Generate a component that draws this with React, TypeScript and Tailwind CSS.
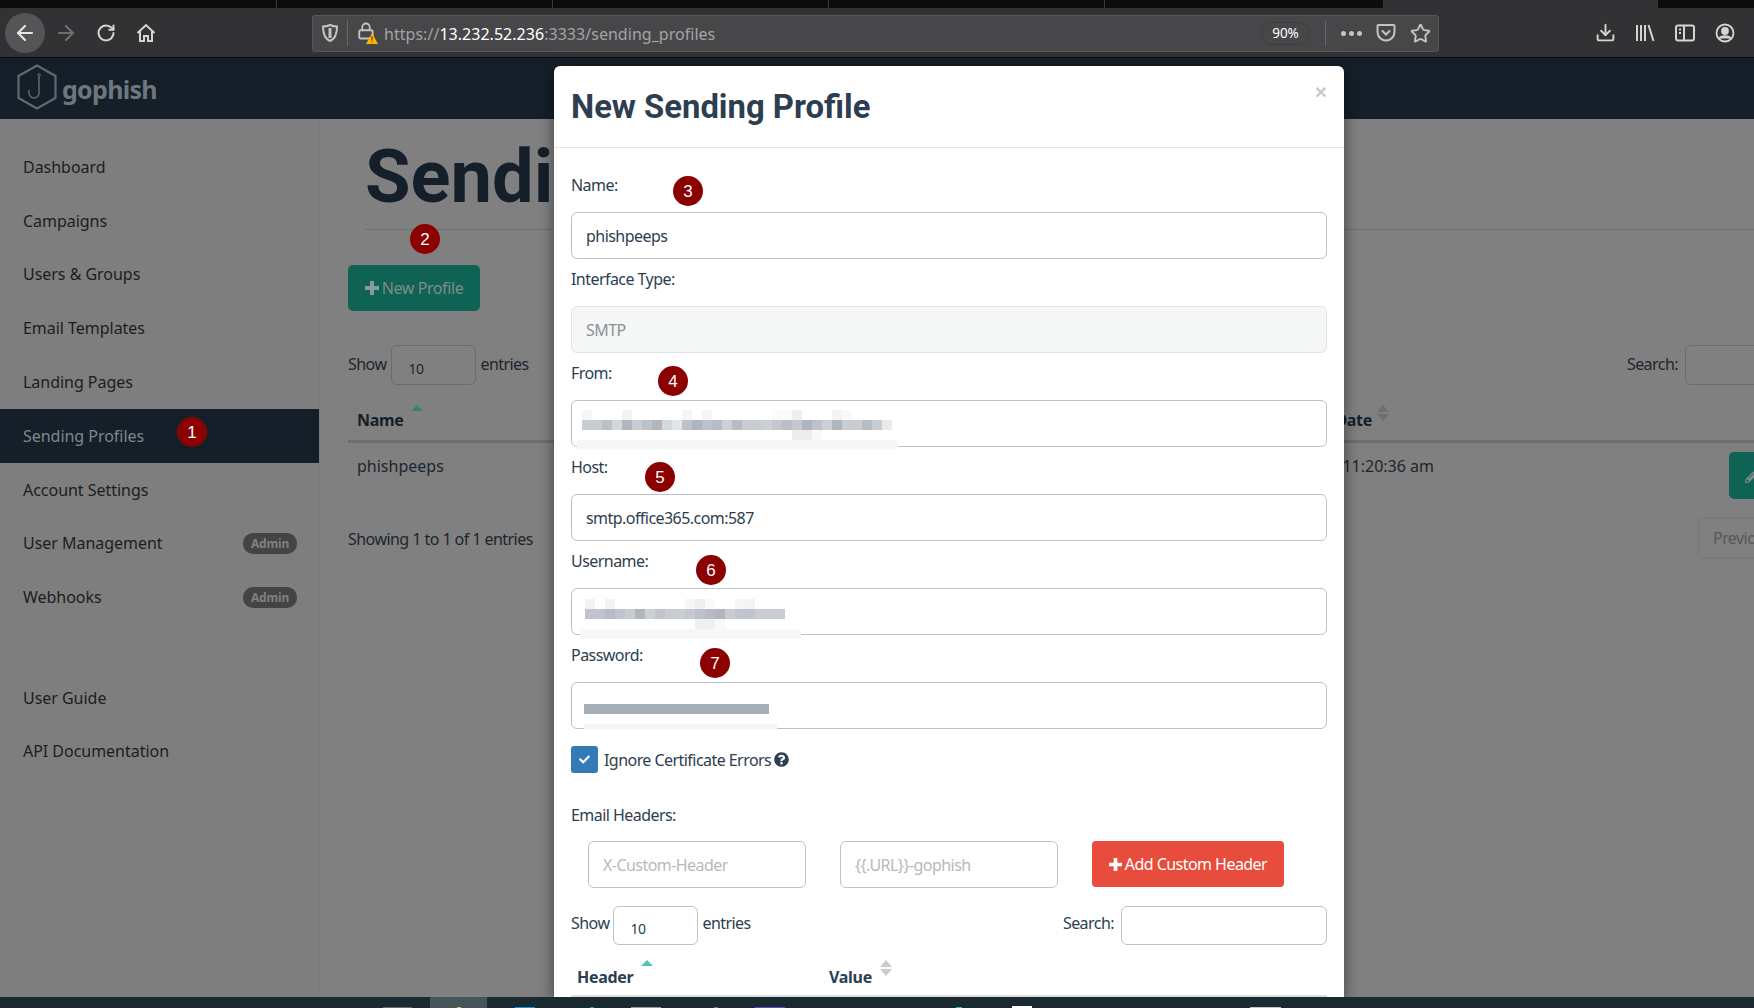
import React from "react";
import { ArrowLeft, ArrowRight, RotateCw, Lock, Star, Download } from "lucide-react";
import { FaCheck, FaQuestionCircle, FaPencilAlt } from "react-icons/fa";

const body = "font-['Noto_Sans',sans-serif] text-[16px] tracking-[-0.55px]";

function Callout({ n, className }: { n: number; className: string }) {
  return (
    <div className={`absolute z-30 flex h-[30px] w-[30px] items-center justify-center rounded-full bg-[#8b0000] font-['Liberation_Sans',sans-serif] text-[17px] leading-none text-white ${className}`}>
      {n}
    </div>
  );
}

function Plus({ className }: { className: string }) {
  return (
    <svg viewBox="0 0 14 14" className={className} fill="currentColor">
      <path d="M5 0h4v5h5v4H9v5H5V9H0V5h5z" />
    </svg>
  );
}

function SortArrows({ dark }: { dark?: boolean }) {
  const c = dark ? "#6f6f6f" : "#cccccc";
  return (
    <svg width="12" height="16" viewBox="0 0 12 16" className="shrink-0">
      <path d="M6 0l6 7H0z" fill={c} />
      <path d="M6 16l6-7H0z" fill={c} />
    </svg>
  );
}

function UpArrow({ color }: { color: string }) {
  return (
    <svg width="12" height="6" viewBox="0 0 12 6" className="block">
      <path d="M6 0l6 6H0z" fill={color} />
    </svg>
  );
}

function Cells({ cells, className }: { cells: string[]; className: string }) {
  return (
    <div className={`absolute flex ${className}`}>
      {cells.map((c, i) => (
        <span key={i} className="h-[10px] w-[10px] shrink-0" style={{ backgroundColor: c === "-" ? "transparent" : `#${c}` }} />
      ))}
    </div>
  );
}

const navTop = ["Dashboard", "Campaigns", "Users & Groups", "Email Templates", "Landing Pages", "Sending Profiles", "Account Settings", "User Management", "Webhooks"];

function Sidebar() {
  return (
    <aside className="w-[320px] shrink-0 border-r border-[#7a7a7a] bg-[#7e7e7e] pt-[21px] font-['Noto_Sans',sans-serif] text-[16px] tracking-[-0.03px] text-[#1d1d1d]">
      {navTop.map((t) => {
        const active = t === "Sending Profiles";
        const admin = t === "User Management" || t === "Webhooks";
        return (
          <div key={t} className={`flex h-[53.8px] w-[319px] items-center justify-between pl-[23px] pr-[22px] ${active ? "bg-[#151f29] text-[#7f878d]" : ""}`}>
            <span>{t}</span>
            {admin && (
              <span className="rounded-[10px] bg-[#444444] px-[8px] py-[3px] text-[12px] font-bold leading-[15px] tracking-[-0.2px] text-[#808080]">Admin</span>
            )}
          </div>
        );
      })}
      <div className="h-[47px]" />
      {["User Guide", "API Documentation"].map((t) => (
        <div key={t} className="flex h-[53.5px] items-center pl-[23px]">{t}</div>
      ))}
    </aside>
  );
}

function Main() {
  return (
    <main className={`min-w-0 flex-1 overflow-hidden bg-[#808080] pl-[28px] text-[#1c262e] ${body}`}>
      <div className="ml-[17px] flex h-[111px] items-center border-b border-[#707070] pt-[6px]">
        <h1 className="font-['Roboto',sans-serif] text-[74px] font-bold leading-none tracking-normal text-[#151f29]">Sending Profiles</h1>
      </div>
      <button className="mt-[35px] flex h-[46px] w-[132px] items-center justify-center gap-[3px] rounded-[5px] bg-[#0f6354] tracking-[-0.4px] text-[#7f8c88]">
        <Plus className="h-[14px] w-[14px] text-[#8a9a96]" />
        <span>New Profile</span>
      </button>
      <div className="mt-[34px] flex h-[40px] w-[1406px] items-center">
        <span className="mb-[2px]">Show</span>
        <div className="ml-[5px] flex h-[40px] w-[85px] items-end rounded-[6px] border border-[#6c6c6c] pb-[5px] pl-[16px] text-[14px] leading-[20px]">10</div>
        <span className="mb-[2px] ml-[4px]">entries</span>
        <span className="mb-[2px] ml-auto">Search:</span>
        <div className="ml-[7px] mr-[-31px] h-[40px] w-[100px] shrink-0 rounded-[6px] border border-[#6c6c6c]" />
      </div>
      <div className="flex h-[58px] w-[1406px] items-end border-b-[3px] border-[#6e6e6e] pb-[8px] pl-[9px] font-bold tracking-[-0.3px] text-[#151f29]">
        <div className="relative w-[700px]">
          <span>Name</span>
          <div className="absolute left-[54px] top-[-3px]"><UpArrow color="#2f8573" /></div>
        </div>
        <div className="flex w-[315px] justify-end">
          <span>Modified Date</span>
        </div>
        <div className="relative ml-[5px] h-[20px] w-[12px]">
          <div className="absolute top-[-7px]"><SortArrows dark /></div>
        </div>
      </div>
      <div className="flex h-[56px] w-[1406px] items-start pl-[9px] pt-[11px] tracking-[0px]">
        <span className="w-[700px]">phishpeeps</span>
        <span className="w-[377px] text-right">March 2021, 11:20:36 am</span>
        <div className="ml-auto mr-[-20px] mt-[-2px] flex h-[47px] w-[45px] shrink-0 items-center rounded-[5px] bg-[#0f6354] pl-[16px]">
          <FaPencilAlt className="h-[14px] w-[14px] text-[#7f8c88]" />
        </div>
      </div>
      <div className="flex h-[60px] w-[1406px] items-start">
        <span className="mt-[28px]">Showing 1 to 1 of 1 entries</span>
        <div className="ml-auto mr-[-22px] mt-[18px] h-[41px] w-[78px] shrink-0 rounded-[5px] border border-[#777777] px-[14px] py-[8px] text-[#575757]">Previous</div>
      </div>
    </main>
  );
}

function Field({ label, value, disabled, children }: { label: string; value?: string; disabled?: boolean; children?: React.ReactNode }) {
  return (
    <div>
      <div className="h-[47px] w-fit pt-[8px] leading-[24px]">{label}</div>
      <div className="relative h-[47px]">
        <input
          readOnly
          disabled={disabled}
          aria-label={label}
          defaultValue={value}
          className={`h-[47px] w-full rounded-[6px] border px-[14px] outline-none ${disabled ? "border-[#e1e4e6] bg-[#f5f6f6] text-[#8a9096]" : "border-[#bdc3c7] bg-white text-[#2c3e50]"}`}
        />
        {children}
      </div>
    </div>
  );
}

function Modal() {
  return (
    <div className={`absolute left-[554px] top-[66px] z-10 h-[931px] w-[790px] overflow-hidden rounded-t-[6px] bg-white text-[#2c3e50] shadow-[0_5px_15px_rgba(0,0,0,0.5)] ${body}`}>
      <div className="flex h-[82px] items-start justify-between border-b border-[#e5e5e5] pl-[17px] pr-[17px]">
        <h2 className="mt-[19px] font-['Roboto',sans-serif] text-[32.8px] font-bold leading-[44px] tracking-normal text-[#2c3e50]">New Sending Profile</h2>
        <span className="mt-[14px] font-['Liberation_Sans',sans-serif] text-[21px] font-bold leading-[24px] tracking-normal text-[#c9c9c9]">×</span>
      </div>
      <div className="px-[17px] pt-[17px]">
        <Field label="Name:" value="phishpeeps" />
        <Field label="Interface Type:" value="SMTP" disabled />
        <Field label="From:">
          <Cells className="left-[11px] top-[10px]" cells={["f5f6f6", "-", "-", "-", "f2f3f3", "-", "-", "-", "-", "-", "f5f5f6", "-", "f5f5f6", "-", "-", "-", "-", "-", "-", "fbfbfb", "fbfbfb", "eeeff1", "-", "-", "-", "f2f3f4", "f9f9f9"]} />
          <Cells className="left-[11px] top-[20px]" cells={["c8cdd2", "c8cdd2", "b9c0c6", "d3d7da", "afb6bd", "c8cdd2", "bcc2c9", "afb7be", "d5d8db", "e2e4e6", "bcc2c9", "aeb6bd", "bcc2c9", "b5bcc3", "ccd0d4", "b5bcc3", "c8cdd2", "c8cdd2", "ccd0d6", "c3c8cd", "b9bfc6", "c3c8cd", "aeb6bd", "bcc2c9", "cbd0d4", "aeb6bd", "c8cdd2", "c8cdd2", "b5bcc3", "c8cdd2", "e8eaeb"]} />
          <Cells className="left-[221px] top-[30px]" cells={["ebecee", "ebecee", "f8f8f8"]} />
          <div className="absolute left-[6px] top-[40px] h-[9px] w-[321px] bg-[#f6f7f7]" />
        </Field>
        <Field label="Host:" value="smtp.office365.com:587" />
        <Field label="Username:">
          <Cells className="left-[14px] top-[11px]" cells={["f3f3f4", "-", "f3f3f4", "-", "-", "-", "-", "-", "-", "-", "f5f5f6", "edeef0", "fafafa", "-", "-", "f6f6f7", "f2f3f4"]} />
          <Cells className="left-[14px] top-[21px]" cells={["c0c5cd", "c0c5cd", "b6bcc5", "c0c5cd", "c8cdd0", "aeb6be", "cbd0d3", "c0c5cd", "c8cdd2", "c8cdd2", "c4c8cf", "bcc2c9", "b4bbc3", "b0b8bf", "c5cbce", "c0c5cd", "c0c5cd", "c8ccd3", "c8ccd3", "c8ccd3"]} />
          <Cells className="left-[124px] top-[31px]" cells={["eeeff1", "eeeff1", "f8f8f8"]} />
          <div className="absolute left-[9px] top-[41px] h-[10px] w-[221px] bg-[#f6f7f7]" />
        </Field>
        <Field label="Password:">
          <div className="absolute left-[13px] top-[22px] h-[10px] w-[185px] bg-[#a6afb6]" />
          <div className="absolute left-[13px] top-[42px] h-[6px] w-[193px] bg-[#f5f6f6]" />
        </Field>
        <div className="mt-[17px] flex h-[27px] items-center">
          <div className="flex h-[27px] w-[27px] items-center justify-center rounded-[3px] bg-[#337ab7]">
            <FaCheck className="h-[11px] w-[11px] text-white" />
          </div>
          <span className="ml-[6px]">Ignore Certificate Errors</span>
          <FaQuestionCircle className="ml-[3px] h-[15px] w-[15px] text-[#2c3e50]" />
        </div>
        <div className="mt-[30px] leading-[24px]">Email Headers:</div>
        <div className="mt-[14px] flex h-[47px] items-start pl-[17px]">
          <input readOnly aria-label="Header name" placeholder="X-Custom-Header" className="h-[47px] w-[218px] rounded-[6px] border border-[#bdc3c7] px-[14px] outline-none placeholder:text-[#b4bac0]" />
          <input readOnly aria-label="Header value" placeholder="{{.URL}}-gophish" className="ml-[34px] h-[47px] w-[218px] rounded-[6px] border border-[#bdc3c7] px-[14px] outline-none placeholder:text-[#b4bac0]" />
          <button className="ml-[34px] flex h-[46px] w-[192px] items-center justify-center gap-[3px] rounded-[4px] bg-[#e74c3c] text-white">
            <Plus className="h-[13px] w-[13px]" />
            <span>Add Custom Header</span>
          </button>
        </div>
        <div className="mt-[18px] flex h-[39px] items-center">
          <span className="mb-[6px]">Show</span>
          <div className="ml-[4px] flex h-[39px] w-[85px] items-end rounded-[6px] border border-[#bdc3c7] pb-[5px] pl-[16px] text-[14px] leading-[20px]">10</div>
          <span className="mb-[6px] ml-[4px]">entries</span>
          <span className="mb-[6px] ml-auto">Search:</span>
          <div className="ml-[7px] h-[39px] w-[206px] rounded-[6px] border border-[#bdc3c7]" />
        </div>
        <div className="flex h-[53px] border-b-[3px] border-[#dddddd] pl-[6px] font-bold tracking-[-0.3px]">
          <div className="relative mt-[21px] w-[252px] leading-[22px]">
            Header
            <div className="absolute left-[64px] top-[-6px]"><UpArrow color="#48c9b0" /></div>
          </div>
          <div className="mt-[21px] leading-[22px]">Value</div>
          <div className="ml-[8px] mt-[15px]"><SortArrows /></div>
        </div>
      </div>
    </div>
  );
}

function TopBar() {
  const ic = "text-[#d4d4d4]";
  return (
    <header className="shrink-0 font-['Noto_Sans',sans-serif]">
      <div className="flex h-[8px] bg-[#0c0c0c]">
        <div className="w-[277px] border-r border-[#3a3a3a]" />
        <div className="w-[276px] border-r border-[#3a3a3a]" />
        <div className="w-[276px] border-r border-[#3a3a3a]" />
        <div className="w-[276px] border-r border-[#3a3a3a]" />
        <div className="w-[278px]" />
        <div className="w-[275px] bg-[#323234]" />
      </div>
      <div className="flex h-[50px] items-center border-b border-[#0c0c0c] bg-[#323234]">
        <div className="ml-[5px] flex h-[40px] w-[40px] items-center justify-center rounded-full bg-[#555557]">
          <ArrowLeft size={24} className="text-[#e6e6e6]" strokeWidth={2.2} />
        </div>
        <ArrowRight size={24} className="ml-[9px] text-[#6f6f71]" strokeWidth={2.2} />
        <RotateCw size={20} className={`ml-[18px] ${ic}`} strokeWidth={2.4} />
        <svg width="20" height="20" viewBox="0 0 20 20" className={`ml-[20px] ${ic}`} fill="none" stroke="currentColor" strokeWidth="2">
          <path d="M1.5 10L10 2l8.500 8M4 8.500V18h4v-5h4v5h4V8.500" />
        </svg>
        <div className="ml-[156px] mt-[1px] flex h-[37px] w-[1127px] items-center rounded-[3px] border border-[#57575a] bg-[#474749] pr-[7px]">
          <svg width="18" height="20" viewBox="0 0 18 20" className="ml-[8px] text-[#c4c4c4]" fill="none" stroke="currentColor" strokeWidth="2">
            <path d="M9 2c2 1 4 1.500 7 1.500C16 11 14 16 9 18 4 16 2 11 2 3.500 5 3.500 7 3 9 2z" />
            <path d="M9 5v10" strokeWidth="3" />
          </svg>
          <div className="ml-[8px] h-[26px] w-px bg-[#67676a]" />
          <div className="relative ml-[9px] h-[22px] w-[20px]">
            <Lock size={18} className="absolute left-0 top-0 text-[#c4c4c4]" strokeWidth={2.4} />
            <svg width="12" height="11" viewBox="0 0 12 11" className="absolute bottom-0 right-[-1px]">
              <path d="M6 0l6 11H0z" fill="#ffb400" />
              <path d="M5.500 3.500h1v4h-1zM5.500 8.500h1v1h-1z" fill="#3a2b00" />
            </svg>
          </div>
          <div className="ml-[7px] mt-[1px] text-[16px] tracking-[0.03px] text-[#a3a3a5]">
            https://<span className="text-white">13.232.52.236</span>:3333/sending_profiles
          </div>
          <div className="ml-auto flex h-[23px] w-[49px] items-center justify-center rounded-full border border-[#3e3e40] text-[13.5px] text-white">90%</div>
          <div className="ml-[15px] h-[26px] w-px bg-[#67676a]" />
          <div className={`ml-[15px] flex gap-[3px] ${ic}`}>
            <span className="h-[5px] w-[5px] rounded-full bg-[#c4c4c4]" />
            <span className="h-[5px] w-[5px] rounded-full bg-[#c4c4c4]" />
            <span className="h-[5px] w-[5px] rounded-full bg-[#c4c4c4]" />
          </div>
          <svg width="20" height="20" viewBox="0 0 20 20" className="ml-[14px] text-[#c4c4c4]" fill="none" stroke="currentColor" strokeWidth="2">
            <path d="M2.500 2h15a1 1 0 0 1 1 1v6a8.500 8.500 0 0 1-17 0V3a1 1 0 0 1 1-1z" />
            <path d="M6.500 8l3.500 3.500L13.500 8" strokeLinecap="round" />
          </svg>
          <Star size={21} className="ml-[14px] text-[#c4c4c4]" strokeWidth={2.2} />
        </div>
        <Download size={21} className={`ml-[156px] ${ic}`} strokeWidth={2.2} />
        <svg width="20" height="20" viewBox="0 0 20 20" className={`ml-[19px] ${ic}`} fill="none" stroke="currentColor" strokeWidth="2">
          <path d="M2 2v16M6 2v16M10 2v16M13.500 2l5 16" />
        </svg>
        <svg width="20" height="20" viewBox="0 0 20 20" className={`ml-[20px] ${ic}`} fill="none" stroke="currentColor" strokeWidth="2">
          <rect x="1" y="2.500" width="18" height="15" rx="2" />
          <path d="M9 2.500v15M4 6.500h2M4 10h2" />
        </svg>
        <svg width="20" height="20" viewBox="0 0 20 20" className={`ml-[20px] ${ic}`} fill="none" stroke="currentColor" strokeWidth="1.800">
          <circle cx="10" cy="10" r="8.500" />
          <circle cx="10" cy="8" r="3" fill="currentColor" />
          <path d="M4.500 15.500c1-3 10-3 11 0" fill="currentColor" />
        </svg>
      </div>
    </header>
  );
}

function Navbar() {
  return (
    <div className="flex h-[61px] shrink-0 items-center bg-[#151f29] pl-[17px]">
      <svg width="40" height="46" viewBox="0 0 40 46" fill="none" stroke="#616970" strokeWidth="2.200" className="mt-[-3px]">
        <path d="M20 1.500L38.500 12v22L20 44.500 1.500 34V12z" />
        <path d="M22 12v17a5 5 0 0 1-10 0v-3" strokeWidth="1.500" />
        <circle cx="22" cy="11" r="1.300" strokeWidth="1" />
      </svg>
      <span className="ml-[5px] mt-[2px] font-['Noto_Sans',sans-serif] text-[25px] font-bold tracking-[-0.7px] text-[#6f777d]">gophish</span>
    </div>
  );
}

function Taskbar() {
  return (
    <div className="relative z-20 flex h-[11px] shrink-0 items-end bg-[#1a2a30]">
      <div className="ml-[383px] h-px w-[29px] bg-[#666b6e]" />
      <div className="ml-[18px] h-[11px] w-[57px] bg-[#45555a]">
        <div className="mx-auto mt-[10px] h-px w-[4px] bg-[#d8c050]" />
      </div>
      <div className="ml-[28px] h-px w-[20px] bg-[#0f97d8]" />
      <div className="ml-[55px] h-px w-[4px] bg-[#3a8ac0]" />
      <div className="ml-[37px] h-px w-[30px] bg-[#9a9a9a]" />
      <div className="ml-[53px] h-px w-[4px] bg-[#8a5fc0]" />
      <div className="ml-[37px] h-px w-[30px] bg-[#5b49c8]" />
      <div className="ml-[171px] h-px w-[6px] bg-[#26b6e0]" />
      <div className="ml-[50px] h-[2px] w-[20px] bg-white" />
      <div className="ml-[218px] h-px w-[31px] bg-[#c4c4c4]" />
    </div>
  );
}

export default function App() {
  return (
    <div className="relative flex h-[1008px] w-[1754px] flex-col overflow-hidden bg-[#808080]">
      <TopBar />
      <Navbar />
      <div className="flex min-h-0 flex-1">
        <Sidebar />
        <Main />
      </div>
      <Taskbar />
      <Modal />
      <Callout n={1} className="left-[177px] top-[417px]" />
      <Callout n={2} className="left-[410px] top-[224px]" />
      <Callout n={3} className="left-[673px] top-[176px]" />
      <Callout n={4} className="left-[658px] top-[366px]" />
      <Callout n={5} className="left-[645px] top-[462px]" />
      <Callout n={6} className="left-[696px] top-[555px]" />
      <Callout n={7} className="left-[700px] top-[648px]" />
    </div>
  );
}
